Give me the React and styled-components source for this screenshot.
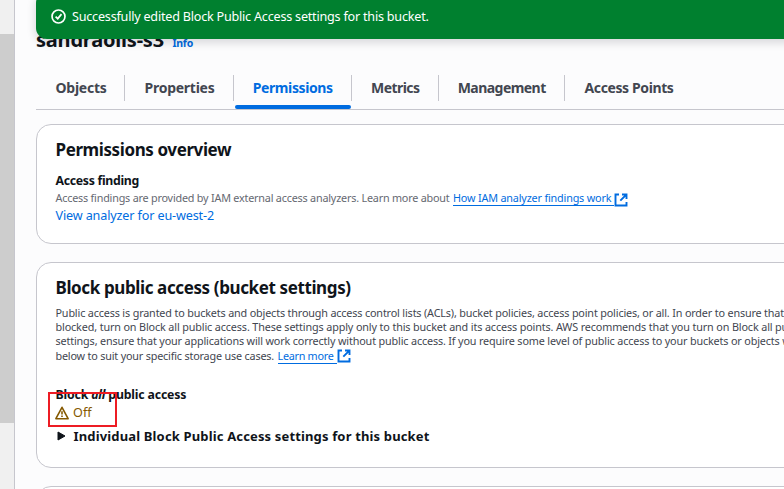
import React from 'react';
import styled, { createGlobalStyle } from 'styled-components';

const GlobalStyle = createGlobalStyle`
  * { box-sizing: border-box; }
  body {
    margin: 0;
    overflow: hidden;
    background: #fcfcfd;
    color: #0f141a;
    font-family: "Noto Sans", "Open Sans", sans-serif;
  }
`;

const Page = styled.div`
  position: relative;
  display: flex;
  height: 489px;
  overflow: hidden;
`;

const ScrollTrack = styled.div`
  flex: none;
  width: 15px;
  padding-top: 34px;
  background: #f0f0f0;
  border-right: 1px solid #c6c6cd;
`;

const ScrollThumb = styled.div`
  height: 389px;
  background: #cdcdcd;
`;

const Main = styled.main`
  flex: none;
  width: 820px;
  padding: 27px 0 0 21px;
`;

const Flash = styled.div`
  position: absolute;
  top: -8px;
  left: 36px;
  width: 800px;
  height: 47px;
  padding: 16px 14.5px 0;
  display: flex;
  align-items: flex-start;
  gap: 6.5px;
  color: #fff;
  background: #00802f;
  border-radius: 11px;
  box-shadow: 0 3px 9px 1px rgba(0, 7, 22, 0.14);
  font-size: 12.6px;
  line-height: 17px;
  letter-spacing: -0.215px;
  white-space: nowrap;

  svg { flex: none; margin-top: 1px; }
`;

const TitleRow = styled.header`
  display: flex;
  align-items: baseline;
  gap: 8.5px;
  height: 48px;
`;

const Title = styled.h1`
  margin: 0;
  font-size: 20px;
  line-height: 26px;
  letter-spacing: -0.2px;
`;

const InfoLink = styled.a`
  color: #006ce0;
  font-size: 10.5px;
  font-weight: 700;
  letter-spacing: -0.25px;
`;

const TabList = styled.nav`
  display: flex;
  height: 35px;
  border-bottom: 1px solid #c6c6cd;
`;

const Tab = styled.a`
  position: relative;
  flex: none;
  width: ${p => p.$width}px;
  height: 26px;
  padding-left: ${p => p.$inset || 19.5}px;
  border-right: ${p => (p.$last ? 'none' : '1px solid #c6c6cd')};
  color: ${p => (p.$active ? '#006ce0' : '#424650')};
  font-size: 14px;
  font-weight: 700;
  line-height: 26px;
  letter-spacing: ${p => p.$tracking}px;
  white-space: nowrap;
`;

const ActiveBar = styled.span`
  position: absolute;
  top: 30px;
  left: 1px;
  right: 0;
  height: 4px;
  border-radius: 2px;
  background: #006ce0;
`;

const Card = styled.section`
  width: 800px;
  height: ${p => p.$height}px;
  margin-top: ${p => p.$gap}px;
  padding: 14px 18.5px 0;
  background: #fff;
  border: 1px solid #c6c6cd;
  border-radius: 15px;
`;

const Heading = styled.h2`
  margin: 0;
  font-size: 17px;
  line-height: 22px;
  letter-spacing: ${p => p.$tracking}px;
  white-space: nowrap;
`;

const Label = styled.div`
  margin-top: ${p => p.$top}px;
  font-size: 12.3px;
  font-weight: 700;
  line-height: 18px;
  letter-spacing: ${p => p.$tracking}px;
`;

const Hint = styled.div`
  display: flex;
  height: 17px;
  color: #656871;
  font-size: 10.8px;
  line-height: 16px;
  letter-spacing: -0.203px;
  white-space: pre;
`;

const Link = styled.a`
  color: #006ce0;
  font-size: 12.6px;
  line-height: 18px;
  letter-spacing: -0.134px;
  display: block;
`;

const ExternalLink = styled.a`
  display: inline-flex;
  align-items: flex-start;
  height: 17px;
  margin-left: ${p => p.$left}px;
  color: #006ce0;
  letter-spacing: ${p => p.$tracking}px;

  svg { margin-top: ${p => p.$iconTop}px; }
`;

const LinkText = styled.span`
  height: 16px;
  padding-right: 3px;
  border-bottom: 1px solid #006ce0;
`;

const Description = styled.div`
  margin-top: 7px;
  color: #424650;
  font-size: 10.8px;
`;

const Line = styled.div`
  display: flex;
  height: ${p => p.$height || 14}px;
  line-height: ${p => p.$height || 14}px;
  letter-spacing: ${p => p.$tracking}px;
  white-space: nowrap;
`;

const Status = styled.div`
  display: flex;
  align-items: center;
  gap: 4px;
  height: 17px;
  margin-left: -0.5px;
  color: #855900;
  font-size: 12.6px;
  line-height: 17px;
  letter-spacing: 0.1px;
`;

const Expander = styled.div`
  display: flex;
  align-items: center;
  gap: 8px;
  height: 20px;
  margin-top: 5px;
  padding-left: 1px;
  font-size: 13px;
  font-weight: 700;
  letter-spacing: 0.151px;
  white-space: nowrap;
`;

const Highlight = styled.div`
  position: absolute;
  left: 48px;
  top: 392px;
  width: 69px;
  height: 35px;
  border: 2px solid #ed1c24;
`;

const SuccessIcon = () => (
  <svg width="15" height="15" viewBox="0 0 16 16" fill="none" stroke="#fff" strokeWidth="1.8">
    <circle cx="8" cy="8" r="6.9" />
    <path d="M4.9 8.1 7.2 10.3 11.2 5.5" />
  </svg>
);

const ExternalIcon = () => (
  <svg width="14" height="14" viewBox="0 0 14 14" fill="none" stroke="#006ce0" strokeWidth="1.9">
    <path d="M5 1.5H1.5V12.5H12.5V9" />
    <path d="M8 1.5H12.5V6M12.3 1.7 6.3 7.7" />
  </svg>
);

const WarningIcon = () => (
  <svg width="14" height="14" viewBox="0 0 14 14" fill="none" stroke="#855900" strokeWidth="1.6" strokeLinejoin="round">
    <path d="M7 1.3 13.1 12.7H0.9Z" />
    <path d="M7 5.2V8.6M7 9.6V11" />
  </svg>
);

const CaretIcon = () => (
  <svg width="9" height="10" viewBox="0 0 9 10">
    <path d="M1 1 8 5 1 9Z" fill="#0f141a" stroke="#0f141a" strokeLinejoin="round" />
  </svg>
);

const tabs = [
  { label: 'Objects', width: 89, tracking: -0.254 },
  { label: 'Properties', width: 109, tracking: -0.253 },
  { label: 'Permissions', width: 118, tracking: -0.388, inset: 18.7, active: true },
  { label: 'Metrics', width: 87, tracking: -0.547, inset: 19 },
  { label: 'Management', width: 126, tracking: -0.546, inset: 18.7 },
  { label: 'Access Points', width: 130, tracking: -0.386, last: true },
];

export default function App() {
  return (
    <Page>
      <GlobalStyle />
      <ScrollTrack><ScrollThumb /></ScrollTrack>
      <Main>
        <TitleRow>
          <Title>sandraolis-s3</Title>
          <InfoLink>Info</InfoLink>
        </TitleRow>
        <TabList>
          {tabs.map(t => (
            <Tab key={t.label} $width={t.width} $inset={t.inset} $tracking={t.tracking} $active={t.active} $last={t.last}>
              {t.label}
              {t.active && <ActiveBar />}
            </Tab>
          ))}
        </TabList>

        <Card $height={120} $gap={14}>
          <Heading $tracking={-0.4}>Permissions overview</Heading>
          <Label $top={11} $tracking={-0.3}>Access finding</Label>
          <Hint>
            Access findings are provided by IAM external access analyzers. Learn more about
            <ExternalLink $left={3.5} $tracking={-0.17} $iconTop={3}>
              <LinkText>How IAM analyzer findings work</LinkText>
              <ExternalIcon />
            </ExternalLink>
          </Hint>
          <Link>View analyzer for eu-west-2</Link>
        </Card>

        <Card $height={206} $gap={18}>
          <Heading $tracking={-0.385}>Block public access (bucket settings)</Heading>
          <Description>
            <Line $tracking={-0.158}>Public access is granted to buckets and objects through access control lists (ACLs), bucket policies, access point policies, or all. In order to ensure that</Line>
            <Line $tracking={-0.134}>blocked, turn on Block all public access. These settings apply only to this bucket and its access points. AWS recommends that you turn on Block all public</Line>
            <Line $tracking={-0.15}>settings, ensure that your applications will work correctly without public access. If you require some level of public access to your buckets or objects within</Line>
            <Line $tracking={-0.18} $height={16}>
              below to suit your specific storage use cases.
              <ExternalLink $left={3.5} $tracking={-0.27} $iconTop={1}>
                <LinkText>Learn more</LinkText>
                <ExternalIcon />
              </ExternalLink>
            </Line>
          </Description>
          <Label $top={22} $tracking={-0.17}>Block <em>all</em> public access</Label>
          <Status><WarningIcon />Off</Status>
          <Expander><CaretIcon />Individual Block Public Access settings for this bucket</Expander>
        </Card>

        <Card $height={60} $gap={18} />
      </Main>
      <Flash role="status">
        <SuccessIcon />
        Successfully edited Block Public Access settings for this bucket.
      </Flash>
      <Highlight />
    </Page>
  );
}
